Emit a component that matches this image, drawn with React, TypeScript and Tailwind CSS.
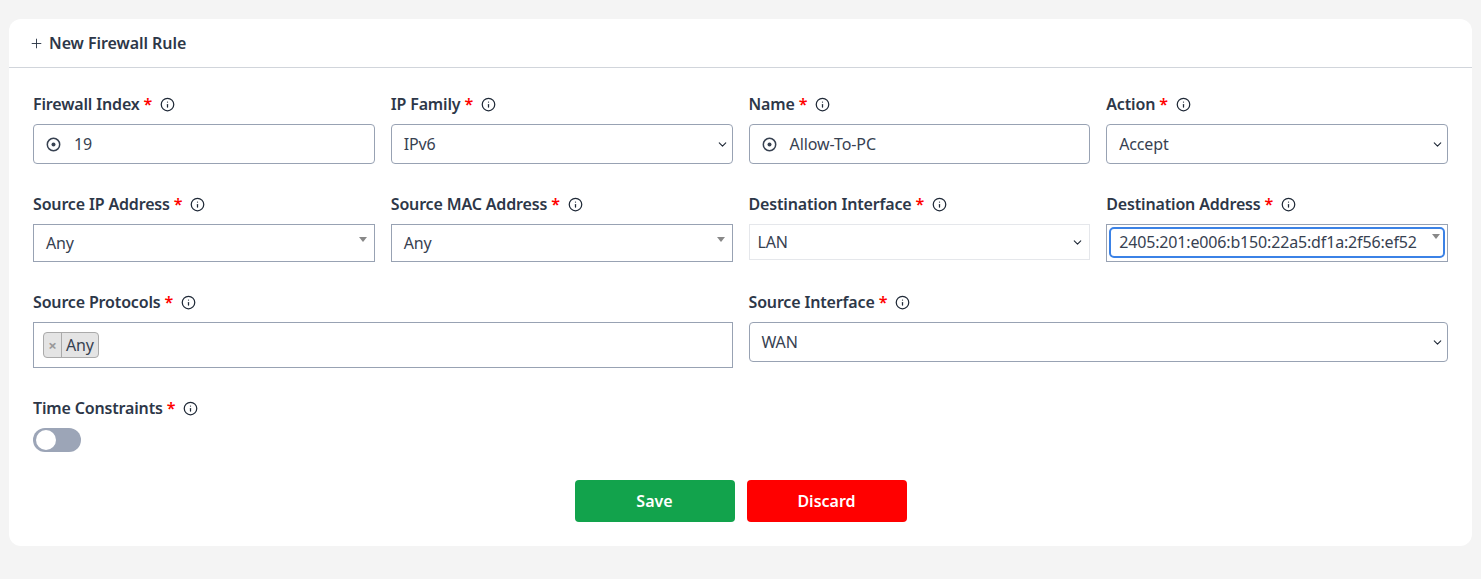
import { ChevronDown, Info, Plus } from "lucide-react";
import type { ReactNode } from "react";

function Label({ text, children }: { text: string; children?: ReactNode }) {
  return (
    <div className="flex items-center h-6 mb-2 text-[16px] font-semibold tracking-[-0.16px] text-[#2d3748]">
      <span>{text}</span>
      <span className="ml-1 text-[#ff0000]">*</span>
      <Info size={15} strokeWidth={2} className="ml-2 text-[#1f2937]" />
      {children}
    </div>
  );
}

function Target() {
  return (
    <svg width="15" height="15" viewBox="0 0 15 15" className="text-[#374151]">
      <circle cx="7.5" cy="7.5" r="6.2" fill="none" stroke="currentColor" strokeWidth="1.5" />
      <circle cx="7.5" cy="7.5" r="2" fill="currentColor" />
    </svg>
  );
}

function Caret({ className = "" }: { className?: string }) {
  return <span className={`w-0 h-0 border-x-[4px] border-x-transparent border-t-[5px] border-t-[#888888] ${className}`} />;
}

function InputBox({ value }: { value: string }) {
  return (
    <div className="flex items-center h-10 px-3 border border-[#98a2b3] rounded text-[#374151] tracking-[-0.08px]">
      <Target />
      <span className="ml-[13px]">{value}</span>
    </div>
  );
}

function SelectBox({ value }: { value: string }) {
  return (
    <div className="flex items-center justify-between h-10 pl-3 pr-[3px] border border-[#98a2b3] rounded text-[#374151] tracking-[-0.16px]">
      <span>{value}</span>
      <ChevronDown size={13} strokeWidth={2} className="text-[#1f2937]" />
    </div>
  );
}

function Select2({ value }: { value: string }) {
  return (
    <div className="flex items-start justify-between h-[38px] pl-3 pr-[7px] border border-[#98a2b3] text-[#374151] tracking-[-0.16px]">
      <span className="mt-[6px]">{value}</span>
      <Caret className="mt-[12px]" />
    </div>
  );
}

export default function App() {
  return (
    <div className="min-h-[579px] bg-[#f4f4f4] pt-[19px] pl-[9px] pr-[9px] font-['Noto_Sans',sans-serif]">
      <div className="bg-white rounded-[12px] h-[527px]">
        <div className="flex items-center h-[49px] pl-[20px] border-b border-[#d1d5db] text-[16px] font-semibold tracking-[-0.06px] text-[#2d3748]">
          <Plus size={15} strokeWidth={1.5} />
          <span className="ml-[5px]">New Firewall Rule</span>
        </div>
        <div className="px-6 pt-6">
          <div className="grid grid-cols-4 gap-x-4 gap-y-7 items-start">
            <div>
              <Label text="Firewall Index" />
              <InputBox value="19" />
            </div>
            <div>
              <Label text="IP Family" />
              <SelectBox value="IPv6" />
            </div>
            <div>
              <Label text="Name" />
              <InputBox value="Allow-To-PC" />
            </div>
            <div>
              <Label text="Action" />
              <SelectBox value="Accept" />
            </div>

            <div>
              <Label text="Source IP Address" />
              <Select2 value="Any" />
            </div>
            <div>
              <Label text="Source MAC Address" />
              <Select2 value="Any" />
            </div>
            <div>
              <Label text="Destination Interface" />
              <div className="flex items-center justify-between h-[36px] pl-2 pr-[5px] border border-[#e5e7eb] text-[#374151] tracking-[-0.16px]">
                <span>LAN</span>
                <ChevronDown size={13} strokeWidth={2} className="text-[#1f2937]" />
              </div>
            </div>
            <div>
              <Label text="Destination Address" />
              <div className="h-[38px] p-[2px] border border-[#98a2b3]">
                <div className="flex items-start justify-between h-[31px] pl-2 pr-[3px] border-2 border-[#3b82e6] rounded-[5px] text-[#374151] tracking-[-0.16px]">
                  <span className="mt-[1px] whitespace-nowrap">2405:201:e006:b150:22a5:df1a:2f56:ef52</span>
                  <Caret className="mt-[5px]" />
                </div>
              </div>
            </div>

            <div className="col-span-2">
              <Label text="Source Protocols" />
              <div className="flex items-start h-[46px] pl-[9px] pt-[9px] border border-[#98a2b3]">
                <div className="flex items-stretch h-[26px] border border-[#aaaaaa] rounded bg-[#e4e4e4] text-[#374151]">
                  <span className="flex items-center justify-center w-[18px] border-r border-[#aaaaaa] text-[#999999] font-bold text-[15px]">×</span>
                  <span className="flex items-center px-1 tracking-[-0.16px]">Any</span>
                </div>
              </div>
            </div>
            <div className="col-span-2">
              <Label text="Source Interface" />
              <SelectBox value="WAN" />
            </div>

            <div>
              <Label text="Time Constraints" />
              <div className="flex items-center w-12 h-6 pl-[3px] rounded-full bg-[#9ca5b7]">
                <span className="w-5 h-5 rounded-full bg-white" />
              </div>
            </div>
          </div>

          <div className="flex justify-center gap-3 mt-7">
            <button className="w-40 h-[42px] rounded bg-[#12a34c] text-white font-semibold">Save</button>
            <button className="w-40 h-[42px] rounded bg-[#ff0000] text-white font-semibold">Discard</button>
          </div>
        </div>
      </div>
    </div>
  );
}
